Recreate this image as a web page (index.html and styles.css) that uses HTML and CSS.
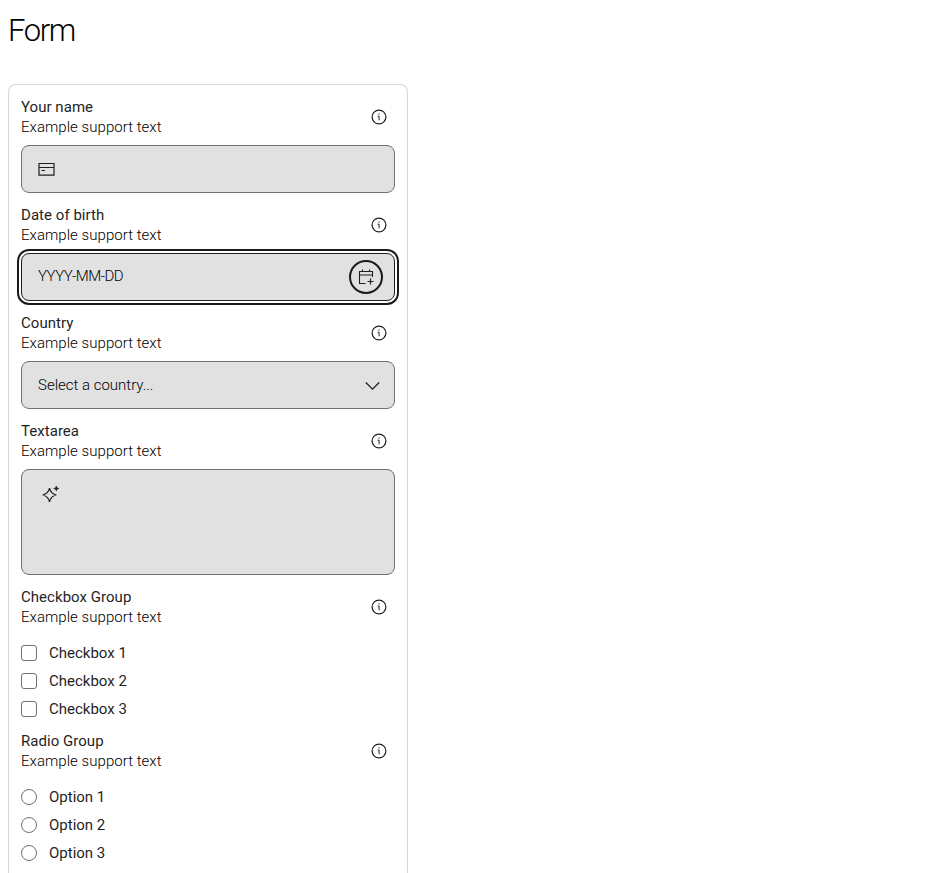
FILE: index.html
```html
<!DOCTYPE html>
<html lang="en">
<head>
<meta charset="utf-8">
<title>Form</title>
<link rel="stylesheet" href="styles.css">
</head>
<body>
<svg class="defs" aria-hidden="true">
  <symbol id="info" viewBox="0 0 16 16"><circle cx="8" cy="8" r="6.9" fill="none" stroke="currentColor" stroke-width="1.2"/><path d="M6.6 7.2H8.1V11.3" fill="none" stroke="currentColor"/><path d="M7.4 4.4h1.2v1.2H7.4z" fill="currentColor"/></symbol>
</svg>
<h1>Form</h1>
<form class="card">
  <div class="field">
    <div class="head"><div><div class="label">Your name</div><div class="support">Example support text</div></div><svg class="info"><use href="#info"/></svg></div>
    <div class="control">
      <svg class="card-icon" width="18" height="14" viewBox="0 0 18 14" fill="none" stroke="currentColor"><path d="M1 1.5H16V13.1H1Z M1 5.5H16" stroke-width="1.2"/><path d="M3.5 8.5H7"/></svg>
    </div>
  </div>
  <div class="field">
    <div class="head"><div><div class="label">Date of birth</div><div class="support">Example support text</div></div><svg class="info"><use href="#info"/></svg></div>
    <div class="control focused">
      <span class="date">YYYY-MM-DD</span>
      <span class="calendar"><svg width="18" height="18" viewBox="0 0 18 18" fill="none" stroke="currentColor" stroke-width="1.1"><path d="M8.5 15.5H2.5V3.5H15.5V9 M2.5 7H15.5 M5.5 1.5V4 M12.5 1.5V4"/><path d="M13.5 10.5V16.5 M10.5 13.5H16.5" stroke-width="1.2"/></svg></span>
    </div>
  </div>
  <div class="field">
    <div class="head"><div><div class="label">Country</div><div class="support">Example support text</div></div><svg class="info"><use href="#info"/></svg></div>
    <div class="control">
      <span class="select">Select a country...</span>
      <svg class="chevron" width="16" height="12" viewBox="0 0 16 12" fill="none" stroke="currentColor" stroke-width="1.3"><path d="M1.8 3.5L8.5 10.2L15.2 3.5"/></svg>
    </div>
  </div>
  <div class="field">
    <div class="head"><div><div class="label">Textarea</div><div class="support">Example support text</div></div><svg class="info"><use href="#info"/></svg></div>
    <div class="control area">
      <svg width="20" height="20" viewBox="0 0 20 20"><path d="M8.5 4.2Q9.7 9.8 15.3 11Q9.7 12.2 8.5 17.8Q7.3 12.2 1.7 11Q7.3 9.8 8.5 4.2Z" fill="none" stroke="currentColor" stroke-width="1.2"/><path d="M15.3 1.9Q15.5 4.3 18 4.5Q15.5 4.7 15.3 7.1Q15.1 4.7 12.6 4.5Q15.1 4.3 15.3 1.9Z" fill="currentColor" stroke="currentColor" stroke-width=".5"/></svg>
    </div>
  </div>
  <div class="field group">
    <div class="head"><div><div class="label">Checkbox Group</div><div class="support">Example support text</div></div><svg class="info"><use href="#info"/></svg></div>
    <div class="choices">
      <label><input type="checkbox"><span>Checkbox 1</span></label>
      <label><input type="checkbox"><span>Checkbox 2</span></label>
      <label><input type="checkbox"><span>Checkbox 3</span></label>
    </div>
  </div>
  <div class="field group">
    <div class="head"><div><div class="label">Radio Group</div><div class="support">Example support text</div></div><svg class="info"><use href="#info"/></svg></div>
    <div class="choices">
      <label><input type="radio" name="option"><span>Option 1</span></label>
      <label><input type="radio" name="option"><span>Option 2</span></label>
      <label><input type="radio" name="option"><span>Option 3</span></label>
    </div>
  </div>
</form>
</body>
</html>
```
FILE: styles.css
```css
* { box-sizing: border-box; }
body {
  margin: 0 8px;
  background: #fff;
  color: #1f1f1f;
  font: 400 15px/20px Roboto, "Liberation Sans", sans-serif;
}
.defs { position: absolute; width: 0; height: 0; }
h1 {
  margin: 0;
  height: 84px;
  padding-top: 10px;
  color: #000;
  font-size: 31px;
  font-weight: 300;
  line-height: 41px;
  letter-spacing: -1.4px;
}
.card {
  display: flex;
  flex-direction: column;
  gap: 12px;
  width: 400px;
  height: 789px;
  padding: 12px 12px 0;
  border: 1px solid #d6d6d6;
  border-bottom: 0;
  border-radius: 8px 8px 0 0;
}
.field { display: flex; flex-direction: column; gap: 8px; }
.group { gap: 16px; }
.head {
  display: flex;
  justify-content: space-between;
  align-items: center;
  height: 40px;
  padding-right: 8px;
}
.info { width: 16px; height: 16px; }
.support, .date, .select { color: #000; font-weight: 300; }
.label { letter-spacing: .04px; }
.support { letter-spacing: .04px; }
.date { padding-bottom: 2px; letter-spacing: -.5px; }
.control {
  display: flex;
  align-items: center;
  justify-content: space-between;
  height: 48px;
  padding: 0 14px 0 16px;
  border: 1px solid #707070;
  border-radius: 8px;
  background: #e1e1e1;
}
.focused {
  padding-right: 11px;
  border-color: #1f1f1f;
  box-shadow: 0 0 0 2px #fff, 0 0 0 4px #1a1a1a;
}
.calendar {
  display: flex;
  align-items: center;
  justify-content: center;
  width: 34px;
  height: 34px;
  border: 2px solid #1a1a1a;
  border-radius: 50%;
}
.area { height: 106px; align-items: flex-start; padding: 14px 19px; }
.choices { display: flex; flex-direction: column; gap: 8px; }
label { display: flex; align-items: center; gap: 12px; height: 20px; }
input {
  appearance: none;
  width: 16px;
  height: 16px;
  margin: 0;
  border: 1px solid #707070;
  border-radius: 3px;
  background: #fff;
}
input[type="radio"] { border-radius: 50%; }
```
